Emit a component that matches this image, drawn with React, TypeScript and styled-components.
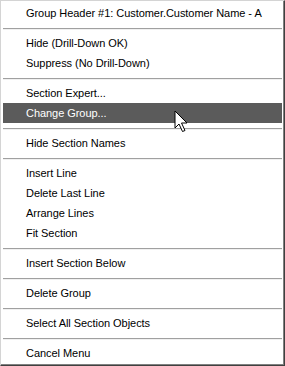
import styled, { createGlobalStyle } from 'styled-components';

const GlobalStyle = createGlobalStyle`
    html, body {
        margin: 0;
        padding: 0;
        background: #ffffff;
    }
`;

const Menu = styled.div`
    position: relative;
    box-sizing: border-box;
    width: 285px;
    height: 366px;
    padding: 2px;
    background: #ffffff;
    border-top: 1px solid #d4d4d4;
    border-left: 1px solid #d4d4d4;
    border-right: 1px solid #404040;
    border-bottom: 1px solid #404040;
    box-shadow: inset -1px -1px 0 #808080;
    font-family: "Liberation Sans", Arial, sans-serif;
    font-size: 11px;
    letter-spacing: -0.05px;
    color: #000000;
`;

const Item = styled.div<{ $active?: boolean }>`
    height: 20px;
    display: flex;
    align-items: center;
    padding-left: 23px;
    background: ${p => (p.$active ? '#5b5b5b' : 'transparent')};
    color: ${p => (p.$active ? '#ffffff' : '#000000')};
    white-space: nowrap;
`;

const Separator = styled.div`
    height: 10px;
    display: flex;
    align-items: center;

    &::before {
        content: '';
        flex: 1;
        height: 1px;
        background: #a0a0a0;
        box-shadow: 0 1px 0 #f0f0f0;
    }
`;

const Cursor = styled.svg`
    position: absolute;
    left: 173px;
    top: 109px;
`;

const groups = [
    ['Group Header #1: Customer.Customer Name - A'],
    ['Hide (Drill-Down OK)', 'Suppress (No Drill-Down)'],
    ['Section Expert...', 'Change Group...'],
    ['Hide Section Names'],
    ['Insert Line', 'Delete Last Line', 'Arrange Lines', 'Fit Section'],
    ['Insert Section Below'],
    ['Delete Group'],
    ['Select All Section Objects'],
    ['Cancel Menu'],
];

const App = () => {
    return (
        <>
            <GlobalStyle />
            <Menu>
                {groups.map((items, gi) => (
                    <div key={gi}>
                        {gi > 0 && <Separator />}
                        {items.map(label => (
                            <Item key={label} $active={label === 'Change Group...'}>
                                {label}
                            </Item>
                        ))}
                    </div>
                ))}
                <Cursor width="16" height="24" viewBox="0 0 16 24">
                    <path
                        d="M1 1 L1 18 L5 14 L8.5 21.5 L11 20.5 L7.5 13 L13 13 Z"
                        fill="#ffffff"
                        stroke="#000000"
                        strokeWidth="1"
                        strokeLinejoin="miter"
                    />
                </Cursor>
            </Menu>
        </>
    );
};

export default App;
